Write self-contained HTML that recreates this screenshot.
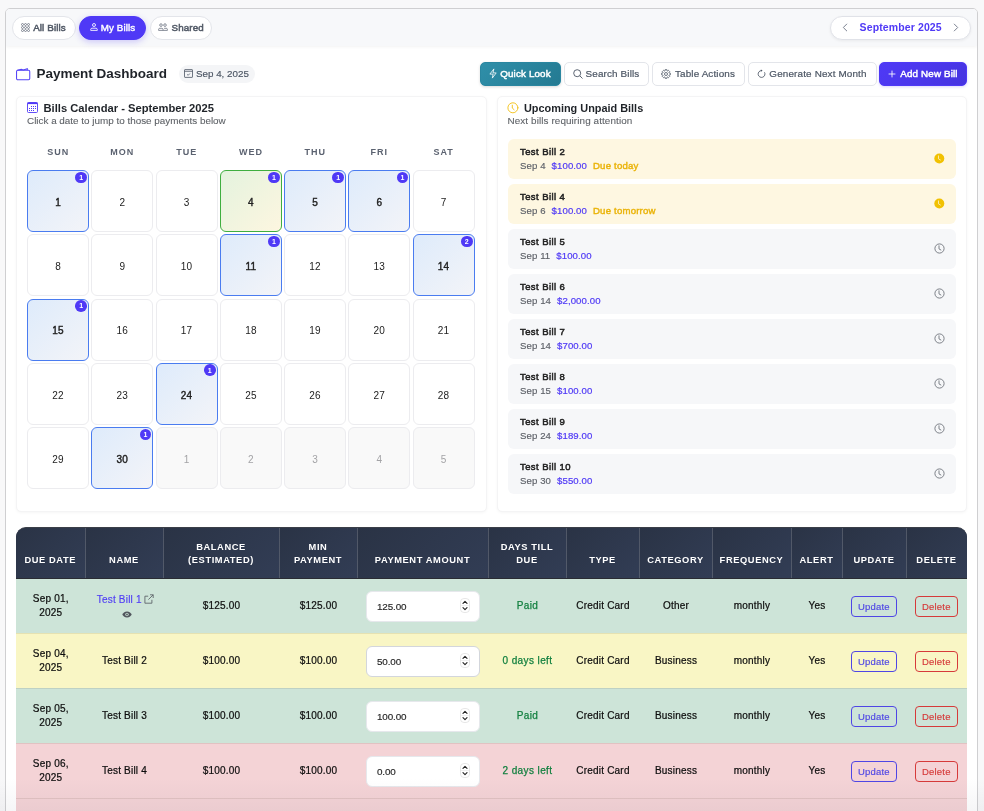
<!DOCTYPE html>
<html><head><meta charset="utf-8">
<style>
*{box-sizing:border-box;margin:0;padding:0}
html,body{width:984px;height:811px;overflow:hidden}
body{background:#f8f8f9;font-family:"Liberation Sans",sans-serif;color:#1f2937;position:relative}
.abs{position:absolute}
.main{position:absolute;left:5px;top:8px;width:973px;height:820px;border:1px solid #cfcfd1;border-radius:5px;background:#fff;overflow:hidden}
.topbar{position:absolute;left:0;top:0;width:971px;height:37px;background:#f7f8fa;box-shadow:0 1px 3px rgba(0,0,0,.05)}
.pill{position:absolute;top:16px;height:24px;padding-bottom:1.5px;border-radius:12px;background:#fff;border:1px solid #e3e5ea;display:flex;align-items:center;justify-content:center;font-size:9.8px;color:#515966;gap:3px;letter-spacing:.12px;-webkit-text-stroke:.5px #515966}
.pill.on{background:#4f39f6;border-color:#4f39f6;color:#fff;-webkit-text-stroke:.38px #fff;box-shadow:0 2px 6px rgba(79,57,246,.25)}
.btn{position:absolute;top:62px;height:24px;padding-bottom:1.5px;border-radius:5px;border:1px solid #e3e5ea;background:#fff;display:flex;align-items:center;justify-content:center;font-size:9.9px;color:#4b5563;gap:3px;-webkit-text-stroke:.2px #4b5563;letter-spacing:.15px}
.card{position:absolute;top:96px;height:415.5px;border:1px solid #f4f4f5;border-radius:5px;background:#fff;box-shadow:0 1px 3px rgba(0,0,0,.04)}
.cell{position:absolute;width:62.25px;height:62.25px;border:1px solid #ececef;border-radius:6px;background:#fff;display:flex;align-items:center;justify-content:center;font-size:10px;color:#222;padding-top:2.5px;letter-spacing:.2px}
.cell.h{border:1.4px solid #4a7cf0;background:linear-gradient(135deg,#deebfb,#f3f4f8);-webkit-text-stroke:.4px #222}
.cell.t{border:1.4px solid #3fae3f;background:linear-gradient(135deg,#e4f3de,#fdf6e0);-webkit-text-stroke:.4px #222}
.cell.n{background:#f9f9f9;color:#a3a3a6}
.badge{position:absolute;right:1.2px;top:.6px;width:11.7px;height:11.7px;-webkit-text-stroke:0;letter-spacing:0;padding-top:0;border-radius:50%;background:#4f39f6;color:#fff;font-size:7px;font-weight:bold;display:flex;align-items:center;justify-content:center}
.dow{position:absolute;top:147px;width:62.3px;text-align:center;font-size:9px;font-weight:bold;letter-spacing:1px;color:#5b6270}
.item{position:absolute;left:508px;width:448px;height:40px;border-radius:6px;background:#f6f7f9}
.item.y{background:#fef7e1}
.item .t1{position:absolute;left:12px;top:6.8px;font-size:9.5px;color:#222;-webkit-text-stroke:.5px #222;letter-spacing:.42px}
.item .t2{position:absolute;left:12px;top:21px;font-size:9.6px;color:#5d6168;white-space:nowrap;-webkit-text-stroke:.15px #5d6168;letter-spacing:.1px}
.item .t2 b{color:#4f39f6;font-weight:normal;margin-left:6px;-webkit-text-stroke:.2px #4f39f6}
.item .t2 i{color:#eab308;font-style:normal;margin-left:6px;-webkit-text-stroke:.4px #eab308;letter-spacing:.2px}
.item svg{position:absolute;right:11px;top:14px}
.thead{position:absolute;left:16px;top:527px;width:950.5px;height:52px;border-top:1px solid #3b3f48;border-bottom:1px solid #2a2c33;border-radius:10px 10px 0 0;background:#2e384d;overflow:hidden}
.th{position:absolute;top:0;height:50px;background:linear-gradient(135deg,#2a3345,#323d55);display:flex;align-items:flex-end;justify-content:center;padding-bottom:11px;text-align:center;font-size:9.3px;font-weight:bold;letter-spacing:.6px;color:#fff;line-height:13px;border-right:1px solid rgba(255,255,255,.18)}
.row{position:absolute;left:16px;width:950.5px;height:55px}
.td{position:absolute;top:0;height:54px;padding-top:.5px;display:flex;align-items:center;justify-content:center;text-align:center;font-size:10px;color:#0e0e0e;line-height:14px;letter-spacing:.2px;-webkit-text-stroke:.22px #0e0e0e}
.inp{position:absolute;left:350.4px;top:11.5px;width:113.4px;height:31.8px;background:#fff;border:1px solid #e6e8ec;border-radius:6px;font-size:9.9px;color:#262626;-webkit-text-stroke:.15px #262626;letter-spacing:-.1px;padding-left:9.5px;padding-top:1px;display:flex;align-items:center}
.ub{position:absolute;left:834.9px;top:17.2px;width:46px;height:20.6px;letter-spacing:.2px;border:1px solid #4f46e5;border-radius:4px;color:#4f46e5;font-size:9.5px;-webkit-text-stroke:.15px #4f46e5;padding-top:.5px;display:flex;align-items:center;justify-content:center}
.db{position:absolute;left:898.8px;top:17.2px;width:43px;height:20.6px;letter-spacing:.2px;border:1px solid #d63a3a;border-radius:4px;color:#d63a3a;font-size:9.5px;-webkit-text-stroke:.15px #d63a3a;padding-top:.5px;display:flex;align-items:center;justify-content:center}
.grn{color:#1f8a4c;font-weight:bold}
</style></head><body><div id="wrap" style="position:absolute;left:0;top:0;width:984px;height:811px;overflow:hidden;will-change:transform">
<div class="main">
  <div class="topbar"></div>
</div>

<!-- pills -->
<div class="pill" style="left:11.5px;width:64px">
  <svg width="9" height="9" viewBox="0 0 9 9"><g fill="none" stroke="#6b7280" stroke-width=".8"><circle cx="1.5" cy="1.5" r="1"/><circle cx="4.5" cy="1.5" r="1"/><circle cx="7.5" cy="1.5" r="1"/><circle cx="1.5" cy="4.5" r="1"/><circle cx="4.5" cy="4.5" r="1"/><circle cx="7.5" cy="4.5" r="1"/><circle cx="1.5" cy="7.5" r="1"/><circle cx="4.5" cy="7.5" r="1"/><circle cx="7.5" cy="7.5" r="1"/></g></svg>
  <span>All Bills</span></div>
<div class="pill on" style="left:79px;width:67px">
  <svg width="8" height="8" viewBox="0 0 8 8"><g fill="none" stroke="#fff" stroke-width=".85"><circle cx="4" cy="2" r="1.5"/><path d="M.7 7.4h6.6V6.4c0-.7-.6-1.2-1.3-1.2H2c-.7 0-1.3.5-1.3 1.2z"/></g></svg>
  <span>My Bills</span></div>
<div class="pill" style="left:149.8px;width:62.7px">
  <svg width="10" height="8" viewBox="0 0 10 8"><g fill="none" stroke="#6b7280" stroke-width=".8"><circle cx="3" cy="2.1" r="1.3"/><circle cx="7" cy="2.1" r="1.3"/><path d="M.6 7.4h4.4V6.3c0-.6-.5-1-1.1-1H1.7c-.6 0-1.1.4-1.1 1zM5 7.4h4.4V6.3c0-.6-.5-1-1.1-1H6.1"/></g></svg>
  <span>Shared</span></div>

<!-- month nav -->
<div class="pill" style="left:829.9px;width:141.6px;top:15.5px;border-color:#e0e2e8;box-shadow:0 1px 3px rgba(0,0,0,.06)">
  <svg class="abs" style="left:11.5px;top:6px" width="6" height="9" viewBox="0 0 6 9"><path d="M5 .8L1.3 4.5 5 8.2" fill="none" stroke="#7b8190" stroke-width="1"/></svg>
  <span style="color:#4f39f6;font-size:10.5px;font-weight:bold;-webkit-text-stroke:0">September 2025</span>
  <svg class="abs" style="right:11.5px;top:6px" width="6" height="9" viewBox="0 0 6 9"><path d="M1 .8l3.7 3.7L1 8.2" fill="none" stroke="#7b8190" stroke-width="1"/></svg>
</div>

<!-- title -->
<svg class="abs" style="left:16px;top:67px" width="15" height="14" viewBox="0 0 15 14"><g fill="none" stroke="#5544f6" stroke-width="1.05"><rect x=".55" y="3.3" width="13.2" height="9.4" rx="1.2"/><path d="M1.3 3.3L5.3 2.4 7.3 2.9 11.3 1.8v1.5M7.3 2.9L11.3 1.8"/></g></svg>
<div class="abs" style="left:36.5px;top:66px;font-size:13.5px;font-weight:bold;color:#1f2329">Payment Dashboard</div>
<div class="abs" style="left:179px;top:65px;width:76px;height:18px;border-radius:9px;background:#f4f5f7;display:flex;align-items:center;padding-left:5px;padding-bottom:1.5px;gap:3px;font-size:9.8px;color:#4b5563;-webkit-text-stroke:.15px #4b5563">
  <svg width="9" height="9" viewBox="0 0 9 9" style="margin-top:1px"><g fill="none" stroke="#4b5563" stroke-width=".8"><rect x=".5" y=".6" width="8" height="7.8" rx=".5"/><path d="M.5 2.3h8M3.2 5.4l1 .9 1.7-1.8"/></g></svg>
  <span>Sep 4, 2025</span></div>

<!-- action buttons -->
<div class="btn" style="left:480px;width:81px;background:linear-gradient(135deg,#2f8fa9,#247a92);border-color:#2a86a0;color:#fff;font-size:9.8px;-webkit-text-stroke:.45px #fff;letter-spacing:.15px;box-shadow:0 1px 3px rgba(0,0,0,.15);padding-bottom:.5px">
  <svg width="8" height="11" viewBox="0 0 8 11" style="margin-top:-.5px;margin-left:-1px"><path d="M4.9.9L.9 6.1h3.2L3.3 10.1 7.2 4.9H4z" fill="none" stroke="#fff" stroke-width=".8" stroke-linejoin="round"/></svg>
  <span>Quick Look</span></div>
<div class="btn" style="left:563.5px;width:85px">
  <svg width="10" height="10" viewBox="0 0 10 10" style="margin-top:1.5px"><g fill="none" stroke="#4b5563" stroke-width=".9"><circle cx="4.2" cy="4.2" r="3.5"/><path d="M6.8 6.8L9.5 9.5"/></g></svg>
  <span>Search Bills</span></div>
<div class="btn" style="left:651.5px;width:93px">
  <svg width="10" height="10" viewBox="0 0 10 10" style="margin-top:1px;margin-right:1px"><g fill="none" stroke="#4b5563" stroke-width=".8" stroke-linejoin="round"><path d="M9.29 4.04 L9.29 5.96 L8.25 6.00 L8.01 6.59 L8.72 7.36 L7.36 8.72 L6.59 8.01 L6.00 8.25 L5.96 9.29 L4.04 9.29 L4.00 8.25 L3.41 8.01 L2.64 8.72 L1.28 7.36 L1.99 6.59 L1.75 6.00 L0.71 5.96 L0.71 4.04 L1.75 4.00 L1.99 3.41 L1.28 2.64 L2.64 1.28 L3.41 1.99 L4.00 1.75 L4.04 0.71 L5.96 0.71 L6.00 1.75 L6.59 1.99 L7.36 1.28 L8.72 2.64 L8.01 3.41 L8.25 4.00Z"/><circle cx="5" cy="5" r="1.5"/></g></svg>
  <span>Table Actions</span></div>
<div class="btn" style="left:747.5px;width:129px">
  <svg width="9" height="10" viewBox="0 0 9 10" style="margin-top:1px"><path d="M4.6 1.6A3.4 3.4 0 1 0 7.5 3.3" fill="none" stroke="#4b5563" stroke-width=".85"/><path d="M3.9.4L5.6 1.6 3.9 2.8z" fill="#4b5563"/></svg>
  <span>Generate Next Month</span></div>
<div class="btn" style="left:879px;width:88px;background:linear-gradient(135deg,#4f39f6,#4634e0);border-color:#4f39f6;color:#fff;font-size:9.8px;-webkit-text-stroke:.45px #fff;letter-spacing:.15px;gap:4px;padding-bottom:.5px;box-shadow:0 1px 3px rgba(79,57,246,.2)">
  <svg width="8" height="8" viewBox="0 0 8 8" style="margin-top:1px"><path d="M4 .6v6.8M.6 4h6.8" stroke="#fff" stroke-width=".85"/></svg>
  <span>Add New Bill</span></div>

<!-- calendar card -->
<div class="card" style="left:16px;width:470.5px"></div>
<svg class="abs" style="left:27px;top:102px" width="11" height="11" viewBox="0 0 11 11"><g fill="none" stroke="#4f39f6" stroke-width=".9"><rect x=".5" y=".5" width="10" height="10" rx="1"/></g><rect x=".5" y=".5" width="10" height="1.6" fill="#4f39f6"/><g fill="#4f39f6"><rect x="4" y="4" width="1" height="1"/><rect x="6" y="4" width="1" height="1"/><rect x="8" y="4" width="1" height="1"/><rect x="2" y="6" width="1" height="1"/><rect x="4" y="6" width="1" height="1"/><rect x="6" y="6" width="1" height="1"/><rect x="8" y="6" width="1" height="1"/><rect x="2" y="8" width="1" height="1"/><rect x="4" y="8" width="1" height="1"/><rect x="6" y="8" width="1" height="1"/></g></svg>
<div class="abs" style="left:43.5px;top:101.7px;font-size:11.2px;font-weight:bold;color:#1f2328">Bills Calendar - September 2025</div>
<div class="abs" style="left:27px;top:114.5px;font-size:9.9px;color:#5f6368;-webkit-text-stroke:.1px #5f6368">Click a date to jump to those payments below</div>

<div class="dow" style="left:27.0px">SUN</div>
<div class="dow" style="left:91.2px">MON</div>
<div class="dow" style="left:155.5px">TUE</div>
<div class="dow" style="left:219.8px">WED</div>
<div class="dow" style="left:284.0px">THU</div>
<div class="dow" style="left:348.2px">FRI</div>
<div class="dow" style="left:412.5px">SAT</div>
<div class="cell h" style="left:27.0px;top:170.0px">1<div class="badge">1</div></div>
<div class="cell" style="left:91.2px;top:170.0px">2</div>
<div class="cell" style="left:155.5px;top:170.0px">3</div>
<div class="cell t" style="left:219.8px;top:170.0px">4<div class="badge">1</div></div>
<div class="cell h" style="left:284.0px;top:170.0px">5<div class="badge">1</div></div>
<div class="cell h" style="left:348.2px;top:170.0px">6<div class="badge">1</div></div>
<div class="cell" style="left:412.5px;top:170.0px">7</div>
<div class="cell" style="left:27.0px;top:234.2px">8</div>
<div class="cell" style="left:91.2px;top:234.2px">9</div>
<div class="cell" style="left:155.5px;top:234.2px">10</div>
<div class="cell h" style="left:219.8px;top:234.2px">11<div class="badge">1</div></div>
<div class="cell" style="left:284.0px;top:234.2px">12</div>
<div class="cell" style="left:348.2px;top:234.2px">13</div>
<div class="cell h" style="left:412.5px;top:234.2px">14<div class="badge">2</div></div>
<div class="cell h" style="left:27.0px;top:298.5px">15<div class="badge">1</div></div>
<div class="cell" style="left:91.2px;top:298.5px">16</div>
<div class="cell" style="left:155.5px;top:298.5px">17</div>
<div class="cell" style="left:219.8px;top:298.5px">18</div>
<div class="cell" style="left:284.0px;top:298.5px">19</div>
<div class="cell" style="left:348.2px;top:298.5px">20</div>
<div class="cell" style="left:412.5px;top:298.5px">21</div>
<div class="cell" style="left:27.0px;top:362.8px">22</div>
<div class="cell" style="left:91.2px;top:362.8px">23</div>
<div class="cell h" style="left:155.5px;top:362.8px">24<div class="badge">1</div></div>
<div class="cell" style="left:219.8px;top:362.8px">25</div>
<div class="cell" style="left:284.0px;top:362.8px">26</div>
<div class="cell" style="left:348.2px;top:362.8px">27</div>
<div class="cell" style="left:412.5px;top:362.8px">28</div>
<div class="cell" style="left:27.0px;top:427.0px">29</div>
<div class="cell h" style="left:91.2px;top:427.0px">30<div class="badge">1</div></div>
<div class="cell n" style="left:155.5px;top:427.0px">1</div>
<div class="cell n" style="left:219.8px;top:427.0px">2</div>
<div class="cell n" style="left:284.0px;top:427.0px">3</div>
<div class="cell n" style="left:348.2px;top:427.0px">4</div>
<div class="cell n" style="left:412.5px;top:427.0px">5</div>

<!-- upcoming card -->
<div class="card" style="left:496.5px;width:470.5px"></div>
<svg class="abs" style="left:507px;top:102px" width="12" height="12" viewBox="0 0 12 12"><g fill="none" stroke="#f2c21b" stroke-width=".95" stroke-linecap="round"><circle cx="5.9" cy="5.8" r="5"/><path d="M5.3 3.2v2.9l1.8 1.6"/></g></svg>
<div class="abs" style="left:524px;top:101.7px;font-size:10.9px;font-weight:bold;color:#1f2328">Upcoming Unpaid Bills</div>
<div class="abs" style="left:507.5px;top:114.5px;font-size:9.9px;color:#5f6368;letter-spacing:.1px;-webkit-text-stroke:.1px #5f6368">Next bills requiring attention</div>

<div class="item y" style="top:139px"><div class="t1">Test Bill 2</div><div class="t2">Sep 4<b>$100.00</b><i>Due today</i></div><svg width="11" height="11" viewBox="0 0 11 11"><circle cx="5.3" cy="5.5" r="5" fill="#f1c102"/><path d="M4.5 2.9v3l1.9 1.1" fill="none" stroke="#fdf0c0" stroke-width=".85" stroke-linecap="round"/></svg></div>
<div class="item y" style="top:184px"><div class="t1">Test Bill 4</div><div class="t2">Sep 6<b>$100.00</b><i>Due tomorrow</i></div><svg width="11" height="11" viewBox="0 0 11 11"><circle cx="5.3" cy="5.5" r="5" fill="#f1c102"/><path d="M4.5 2.9v3l1.9 1.1" fill="none" stroke="#fdf0c0" stroke-width=".85" stroke-linecap="round"/></svg></div>
<div class="item" style="top:229px"><div class="t1">Test Bill 5</div><div class="t2">Sep 11<b>$100.00</b></div><svg width="11" height="11" viewBox="0 0 11 11"><circle cx="5.5" cy="5.5" r="4.6" fill="none" stroke="#6f747c" stroke-width=".9"/><path d="M5 2.8v3.1l1.9 1.1" fill="none" stroke="#6f747c" stroke-width=".9" stroke-linecap="round"/></svg></div>
<div class="item" style="top:274px"><div class="t1">Test Bill 6</div><div class="t2">Sep 14<b>$2,000.00</b></div><svg width="11" height="11" viewBox="0 0 11 11"><circle cx="5.5" cy="5.5" r="4.6" fill="none" stroke="#6f747c" stroke-width=".9"/><path d="M5 2.8v3.1l1.9 1.1" fill="none" stroke="#6f747c" stroke-width=".9" stroke-linecap="round"/></svg></div>
<div class="item" style="top:319px"><div class="t1">Test Bill 7</div><div class="t2">Sep 14<b>$700.00</b></div><svg width="11" height="11" viewBox="0 0 11 11"><circle cx="5.5" cy="5.5" r="4.6" fill="none" stroke="#6f747c" stroke-width=".9"/><path d="M5 2.8v3.1l1.9 1.1" fill="none" stroke="#6f747c" stroke-width=".9" stroke-linecap="round"/></svg></div>
<div class="item" style="top:364px"><div class="t1">Test Bill 8</div><div class="t2">Sep 15<b>$100.00</b></div><svg width="11" height="11" viewBox="0 0 11 11"><circle cx="5.5" cy="5.5" r="4.6" fill="none" stroke="#6f747c" stroke-width=".9"/><path d="M5 2.8v3.1l1.9 1.1" fill="none" stroke="#6f747c" stroke-width=".9" stroke-linecap="round"/></svg></div>
<div class="item" style="top:409px"><div class="t1">Test Bill 9</div><div class="t2">Sep 24<b>$189.00</b></div><svg width="11" height="11" viewBox="0 0 11 11"><circle cx="5.5" cy="5.5" r="4.6" fill="none" stroke="#6f747c" stroke-width=".9"/><path d="M5 2.8v3.1l1.9 1.1" fill="none" stroke="#6f747c" stroke-width=".9" stroke-linecap="round"/></svg></div>
<div class="item" style="top:454px"><div class="t1">Test Bill 10</div><div class="t2">Sep 30<b>$550.00</b></div><svg width="11" height="11" viewBox="0 0 11 11"><circle cx="5.5" cy="5.5" r="4.6" fill="none" stroke="#6f747c" stroke-width=".9"/><path d="M5 2.8v3.1l1.9 1.1" fill="none" stroke="#6f747c" stroke-width=".9" stroke-linecap="round"/></svg></div>

<!-- table -->
<div class="thead">
  <div class="th" style="left:0;width:69.5px">DUE DATE</div>
  <div class="th" style="left:69.5px;width:78px">NAME</div>
  <div class="th" style="left:147.5px;width:116px">BALANCE<br>(ESTIMATED)</div>
  <div class="th" style="left:263.5px;width:78px">MIN<br>PAYMENT</div>
  <div class="th" style="left:341.5px;width:131px">PAYMENT AMOUNT</div>
  <div class="th" style="left:472.5px;width:78px">DAYS TILL<br>DUE</div>
  <div class="th" style="left:550.5px;width:73px">TYPE</div>
  <div class="th" style="left:623.5px;width:73px">CATEGORY</div>
  <div class="th" style="left:696.5px;width:79px">FREQUENCY</div>
  <div class="th" style="left:775.5px;width:51px">ALERT</div>
  <div class="th" style="left:826.5px;width:64px">UPDATE</div>
  <div class="th" style="left:890.5px;width:60px;border-right:none">DELETE</div>
</div>
<div class="row" style="top:579px;background:#cde4d8;height:54px"><div class="td" style="left:0px;width:69.5px;">Sep 01,<br>2025</div><div class="td" style="left:69.5px;width:78.0px;"><div style="display:flex;flex-direction:column;align-items:center;margin-top:-2px"><div style="display:flex;align-items:center;gap:2.5px;color:#4f3cf5;-webkit-text-stroke:.15px #4f3cf5;letter-spacing:.2px;padding-left:2px">Test Bill 1<svg width="10" height="10" viewBox="0 0 10 10" style="margin-top:-1px"><g fill="none" stroke="#5a5f66" stroke-width=".85"><path d="M4.2 2.2H.9v7h7V5.8"/><path d="M6 .8h3.2V4M9.2.8L4.4 5.6"/></g></svg></div><svg style="margin-top:4px;margin-left:4px" width="10" height="7" viewBox="0 0 10 7"><path d="M5 .5C2.6.5 1 2.3.3 3.5 1 4.7 2.6 6.5 5 6.5s4-1.8 4.7-3C9 2.3 7.4.5 5 .5z" fill="#50555c"/><circle cx="5" cy="3.5" r="1.7" fill="#cde4d8"/><circle cx="5" cy="3.5" r=".9" fill="#50555c"/></svg></div></div><div class="td" style="left:147.5px;width:116.0px;">$125.00</div><div class="td" style="left:263.5px;width:78.0px;">$125.00</div><div class="inp">125.00<svg class="abs" style="right:9px;top:6.5px" width="10" height="15" viewBox="0 0 10 15"><rect x=".5" y=".5" width="9" height="14" rx="3.5" fill="#fff" stroke="#dcdcdc" stroke-width=".7"/><path d="M.8 7.5h8.4" stroke="#e6e6e6" stroke-width=".6"/><path d="M3 5.3l2-1.9 2 1.9M3 9.7l2 1.9 2-1.9" fill="none" stroke="#222" stroke-width="1.15" stroke-linecap="round" stroke-linejoin="round"/></svg></div><div class="td" style="left:472.5px;width:78.0px;color:#138040;-webkit-text-stroke:.25px #138040;letter-spacing:.4px">Paid</div><div class="td" style="left:550.5px;width:73.0px;">Credit Card</div><div class="td" style="left:623.5px;width:73.0px;">Other</div><div class="td" style="left:696.5px;width:79.0px;">monthly</div><div class="td" style="left:775.5px;width:51.0px;">Yes</div><div class="ub">Update</div><div class="db">Delete</div></div>
<div class="row" style="top:633px;background:#f9f6c5;border-top:1px solid rgba(60,50,20,.1)"><div class="td" style="left:0px;width:69.5px;">Sep 04,<br>2025</div><div class="td" style="left:69.5px;width:78.0px;">Test Bill 2</div><div class="td" style="left:147.5px;width:116.0px;">$100.00</div><div class="td" style="left:263.5px;width:78.0px;">$100.00</div><div class="inp" style="border-color:#d3d6dc">50.00<svg class="abs" style="right:9px;top:6.5px" width="10" height="15" viewBox="0 0 10 15"><rect x=".5" y=".5" width="9" height="14" rx="3.5" fill="#fff" stroke="#dcdcdc" stroke-width=".7"/><path d="M.8 7.5h8.4" stroke="#e6e6e6" stroke-width=".6"/><path d="M3 5.3l2-1.9 2 1.9M3 9.7l2 1.9 2-1.9" fill="none" stroke="#222" stroke-width="1.15" stroke-linecap="round" stroke-linejoin="round"/></svg></div><div class="td" style="left:472.5px;width:78.0px;color:#138040;-webkit-text-stroke:.25px #138040;letter-spacing:.4px">0 days left</div><div class="td" style="left:550.5px;width:73.0px;">Credit Card</div><div class="td" style="left:623.5px;width:73.0px;">Business</div><div class="td" style="left:696.5px;width:79.0px;">monthly</div><div class="td" style="left:775.5px;width:51.0px;">Yes</div><div class="ub">Update</div><div class="db">Delete</div></div>
<div class="row" style="top:688px;background:#cde4d8;border-top:1px solid rgba(60,50,20,.1)"><div class="td" style="left:0px;width:69.5px;">Sep 05,<br>2025</div><div class="td" style="left:69.5px;width:78.0px;">Test Bill 3</div><div class="td" style="left:147.5px;width:116.0px;">$100.00</div><div class="td" style="left:263.5px;width:78.0px;">$100.00</div><div class="inp">100.00<svg class="abs" style="right:9px;top:6.5px" width="10" height="15" viewBox="0 0 10 15"><rect x=".5" y=".5" width="9" height="14" rx="3.5" fill="#fff" stroke="#dcdcdc" stroke-width=".7"/><path d="M.8 7.5h8.4" stroke="#e6e6e6" stroke-width=".6"/><path d="M3 5.3l2-1.9 2 1.9M3 9.7l2 1.9 2-1.9" fill="none" stroke="#222" stroke-width="1.15" stroke-linecap="round" stroke-linejoin="round"/></svg></div><div class="td" style="left:472.5px;width:78.0px;color:#138040;-webkit-text-stroke:.25px #138040;letter-spacing:.4px">Paid</div><div class="td" style="left:550.5px;width:73.0px;">Credit Card</div><div class="td" style="left:623.5px;width:73.0px;">Business</div><div class="td" style="left:696.5px;width:79.0px;">monthly</div><div class="td" style="left:775.5px;width:51.0px;">Yes</div><div class="ub">Update</div><div class="db">Delete</div></div>
<div class="row" style="top:743px;background:#f4d3d6;border-top:1px solid rgba(60,50,20,.1)"><div class="td" style="left:0px;width:69.5px;">Sep 06,<br>2025</div><div class="td" style="left:69.5px;width:78.0px;">Test Bill 4</div><div class="td" style="left:147.5px;width:116.0px;">$100.00</div><div class="td" style="left:263.5px;width:78.0px;">$100.00</div><div class="inp">0.00<svg class="abs" style="right:9px;top:6.5px" width="10" height="15" viewBox="0 0 10 15"><rect x=".5" y=".5" width="9" height="14" rx="3.5" fill="#fff" stroke="#dcdcdc" stroke-width=".7"/><path d="M.8 7.5h8.4" stroke="#e6e6e6" stroke-width=".6"/><path d="M3 5.3l2-1.9 2 1.9M3 9.7l2 1.9 2-1.9" fill="none" stroke="#222" stroke-width="1.15" stroke-linecap="round" stroke-linejoin="round"/></svg></div><div class="td" style="left:472.5px;width:78.0px;color:#138040;-webkit-text-stroke:.25px #138040;letter-spacing:.4px">2 days left</div><div class="td" style="left:550.5px;width:73.0px;">Credit Card</div><div class="td" style="left:623.5px;width:73.0px;">Business</div><div class="td" style="left:696.5px;width:79.0px;">monthly</div><div class="td" style="left:775.5px;width:51.0px;">Yes</div><div class="ub">Update</div><div class="db">Delete</div></div>
<div class="row" style="top:798px;background:#f4d3d6;border-top:1px solid rgba(60,50,20,.1)"><div class="td" style="left:0px;width:69.5px;">Sep 07,<br>2025</div><div class="td" style="left:69.5px;width:78.0px;">Test Bill 5</div><div class="td" style="left:147.5px;width:116.0px;">$100.00</div><div class="td" style="left:263.5px;width:78.0px;">$100.00</div><div class="inp">0.00<svg class="abs" style="right:9px;top:6.5px" width="10" height="15" viewBox="0 0 10 15"><rect x=".5" y=".5" width="9" height="14" rx="3.5" fill="#fff" stroke="#dcdcdc" stroke-width=".7"/><path d="M.8 7.5h8.4" stroke="#e6e6e6" stroke-width=".6"/><path d="M3 5.3l2-1.9 2 1.9M3 9.7l2 1.9 2-1.9" fill="none" stroke="#222" stroke-width="1.15" stroke-linecap="round" stroke-linejoin="round"/></svg></div><div class="td" style="left:472.5px;width:78.0px;color:#138040;-webkit-text-stroke:.25px #138040;letter-spacing:.4px">3 days left</div><div class="td" style="left:550.5px;width:73.0px;">Credit Card</div><div class="td" style="left:623.5px;width:73.0px;">Business</div><div class="td" style="left:696.5px;width:79.0px;">monthly</div><div class="td" style="left:775.5px;width:51.0px;">Yes</div><div class="ub">Update</div><div class="db">Delete</div></div>
<div class="abs" style="left:0;top:778px;width:984px;height:33px;background:linear-gradient(to bottom,rgba(40,40,70,0),rgba(40,40,70,.045))"></div>

</div></body></html>
